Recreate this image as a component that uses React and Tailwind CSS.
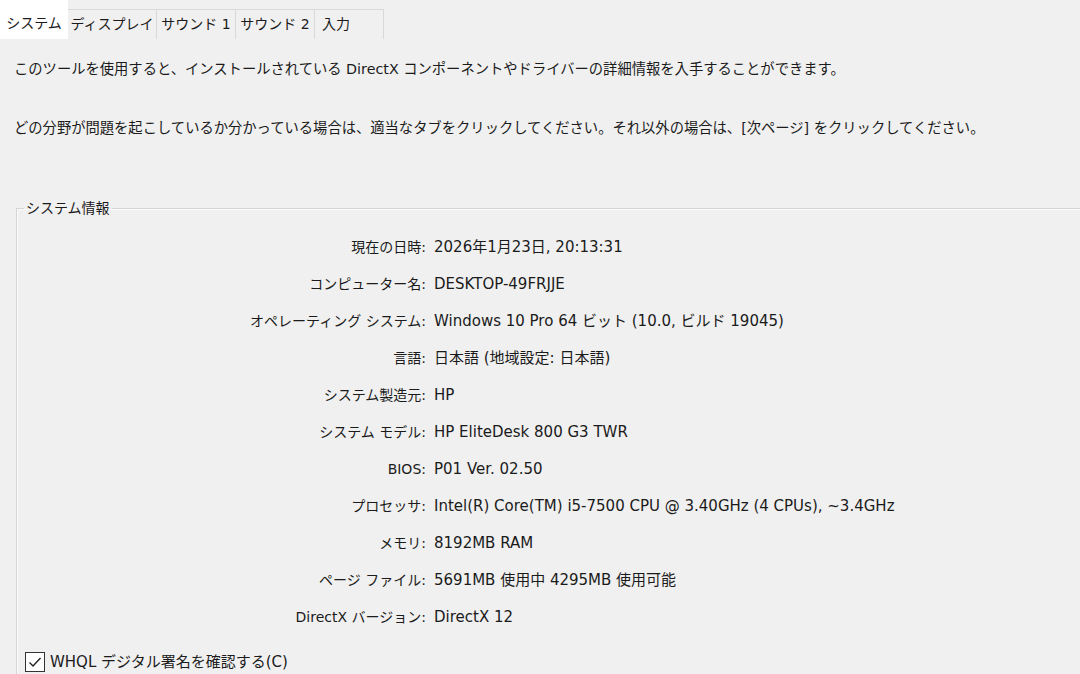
import React from 'react';

const tabs = [
  { label: 'システム', w: 'w-[68px]', active: true },
  { label: 'ディスプレイ', w: 'w-[89px]' },
  { label: 'サウンド 1', w: 'w-[79px]' },
  { label: 'サウンド 2', w: 'w-[79px]' },
  { label: '入力', w: 'w-[69px]', left: true },
];

const rows = [
  ['現在の日時:', '2026年1月23日, 20:13:31'],
  ['コンピューター名:', 'DESKTOP-49FRJJE'],
  ['オペレーティング システム:', 'Windows 10 Pro 64 ビット (10.0, ビルド 19045)'],
  ['言語:', '日本語 (地域設定: 日本語)'],
  ['システム製造元:', 'HP'],
  ['システム モデル:', 'HP EliteDesk 800 G3 TWR'],
  ['BIOS:', 'P01 Ver. 02.50'],
  ['プロセッサ:', 'Intel(R) Core(TM) i5-7500 CPU @ 3.40GHz (4 CPUs), ~3.4GHz'],
  ['メモリ:', '8192MB RAM'],
  ['ページ ファイル:', '5691MB 使用中 4295MB 使用可能'],
  ['DirectX バージョン:', 'DirectX 12'],
];

export default function App() {
  return (
    <div className="w-[1080px] h-[674px] overflow-hidden bg-[#f0f0f0] text-[#1b1b1b] font-['DejaVu_Sans','Noto_Sans_CJK_JP',sans-serif] text-[14px]">
      {/* tabs */}
      <div className="flex items-end h-[39px]">
        {tabs.map((t) =>
          t.active ? (
            <div key={t.label} className={`${t.w} h-[39px] bg-white flex items-center justify-center pt-[8px]`}>
              {t.label}
            </div>
          ) : (
            <div
              key={t.label}
              className={`${t.w} h-[30px] border border-b-0 border-l-0 border-[#d9d9d9] flex items-center ${
                t.left ? 'justify-start pl-[7px]' : 'justify-center'
              }`}
            >
              {t.label}
            </div>
          )
        )}
      </div>

      <div className="pl-[14px] pt-[18px] text-[14.3px]">
        <p className="leading-[24px]">
          このツールを使用すると、インストールされている DirectX コンポーネントやドライバーの詳細情報を入手することができます。
        </p>
        <p className="leading-[24px] mt-[35px]">
          どの分野が問題を起こしているか分かっている場合は、適当なタブをクリックしてください。それ以外の場合は、[次ページ] をクリックしてください。
        </p>
      </div>

      <fieldset className="ml-[16px] mt-[58px] border-t border-l border-[#d5d5d5] shadow-[inset_1px_1px_0_#fbfbfb] pt-[10px]">
        <legend className="ml-[7px] px-[2px]">システム情報</legend>
        <div className="flex flex-col">
          {rows.map(([k, v]) => (
            <div key={k} className="flex h-[37px] items-center">
              <div className="w-[409px] text-right">{k}</div>
              <div className="pl-[8px] text-[15px]">{v}</div>
            </div>
          ))}
        </div>
        <label className="flex items-center gap-[5px] ml-[8px] mt-[15px] text-[15px]">
          <span className="w-[20px] h-[20px] border border-[#333] bg-white flex items-center justify-center">
            <svg width="16" height="16" viewBox="0 0 16 16" fill="none">
              <path d="M2.5 8.5 L6 12 L13.5 4" stroke="#222" strokeWidth="1.4" />
            </svg>
          </span>
          <span>WHQL デジタル署名を確認する(C)</span>
        </label>
      </fieldset>
    </div>
  );
}
